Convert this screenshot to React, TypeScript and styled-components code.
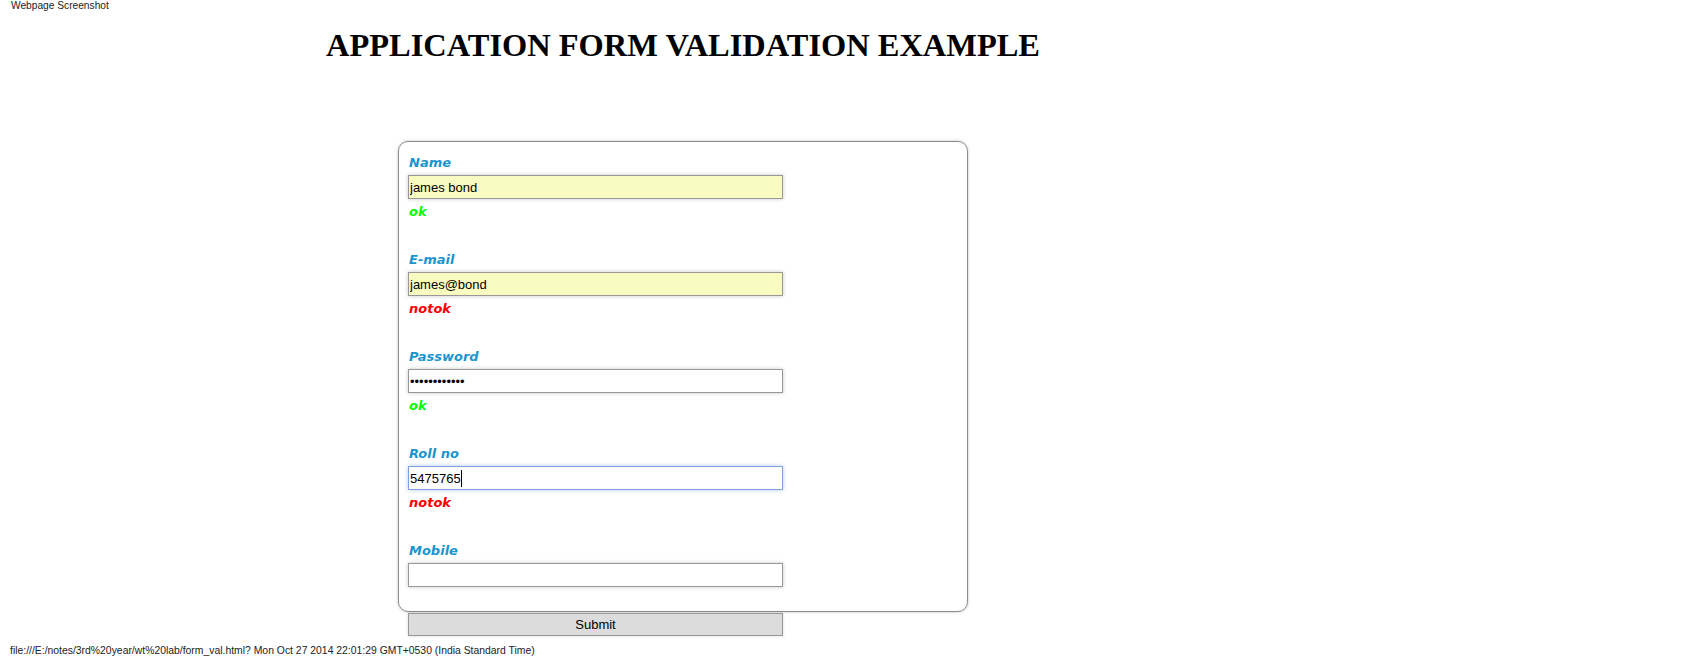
import React from "react";
import styled, { createGlobalStyle } from "styled-components";

const Global = createGlobalStyle`
  html, body { margin: 0; padding: 0; background: #fff; }
  body { font-family: "Liberation Sans", Arial, sans-serif; }
`;

const Page = styled.div`
  width: 1700px;
  height: 657px;
  display: flex;
  flex-direction: column;
  align-items: flex-start;
  padding-left: 10px;
  box-sizing: border-box;
  overflow: hidden;
`;

const Caption = styled.div<{ $left?: number; $size?: number }>`
  font-family: "Liberation Sans", Arial, sans-serif;
  font-size: ${(p) => p.$size ?? 10.2}px;
  line-height: 12px;
  color: #222;
  white-space: nowrap;
  margin-left: ${(p) => p.$left ?? 0}px;
`;

const Heading = styled.h1`
  margin: 15px 0 0 316px;
  font-family: "Liberation Serif", "Times New Roman", serif;
  font-weight: bold;
  font-size: 32.45px;
  line-height: 37px;
  color: #000;
`;

const Card = styled.form`
  margin: 77px 0 0 388px;
  width: 570px;
  box-sizing: border-box;
  border: 1px solid #8c8c8c;
  border-radius: 10px;
  box-shadow: 0 0 3px rgba(0, 0, 0, 0.25);
  padding: 13px 9px 24px;
  display: flex;
  flex-direction: column;
  gap: 32px;
`;

const Group = styled.div`
  display: flex;
  flex-direction: column;
  align-items: flex-start;
`;

const Label = styled.label`
  font-family: "DejaVu Sans", Verdana, sans-serif;
  font-weight: bold;
  font-style: italic;
  font-size: 13px;
  line-height: 16px;
  color: #1b95cf;
  margin: 0 0 4px 1px;
`;

const FieldWrap = styled.div`
  position: relative;
`;

const Field = styled.input<{ $filled?: boolean; $focused?: boolean }>`
  display: block;
  width: 375px;
  height: 24px;
  box-sizing: border-box;
  margin: 0;
  padding: 0 1px;
  font-family: "Liberation Sans", Arial, sans-serif;
  font-size: 13px;
  color: #000;
  background: ${(p) => (p.$filled ? "#f9fcc0" : "#fff")};
  border: 1px solid ${(p) => (p.$focused ? "#7ea3dc" : "#989898")};
  box-shadow: ${(p) =>
    p.$focused ? "0 0 4px rgba(80, 130, 210, 0.45)" : "0 0 4px rgba(0, 0, 0, 0.22)"};
  outline: none;
`;

const Caret = styled.span`
  position: absolute;
  top: 4px;
  width: 1px;
  height: 17px;
  background: #000;
`;

const Status = styled.div<{ $ok: boolean }>`
  font-family: "DejaVu Sans", Verdana, sans-serif;
  font-weight: bold;
  font-style: italic;
  font-size: 13px;
  line-height: 16px;
  margin: 5px 0 0 1px;
  color: ${(p) => (p.$ok ? "#00ff00" : "#ff0000")};
`;

const SubmitButton = styled.button`
  margin: 1px 0 0 398px;
  width: 375px;
  height: 24px;
  box-sizing: border-box;
  background: #dcdcdc;
  border: 1px solid #989898;
  box-shadow: 0 0 3px rgba(0, 0, 0, 0.15);
  font-family: "Liberation Sans", Arial, sans-serif;
  font-size: 13px;
  color: #000;
  padding: 0;
`;

const Footer = styled(Caption)`
  margin-top: 9px;
`;

type FieldDef = {
  label: string;
  value: string;
  type?: string;
  filled?: boolean;
  focused?: boolean;
  status?: "ok" | "notok";
};

const fields: FieldDef[] = [
  { label: "Name", value: "james bond", filled: true, status: "ok" },
  { label: "E-mail", value: "james@bond", filled: true, status: "notok" },
  { label: "Password", value: "abcdefghijkl", type: "password", status: "ok" },
  { label: "Roll no", value: "5475765", focused: true, status: "notok" },
  { label: "Mobile", value: "" },
];

export default function App() {
  return (
    <>
      <Global />
      <Page>
        <Caption $left={1}>Webpage Screenshot</Caption>
        <Heading>APPLICATION FORM VALIDATION EXAMPLE</Heading>
        <Card onSubmit={(e) => e.preventDefault()}>
          {fields.map((f) => (
            <Group key={f.label}>
              <Label>{f.label}</Label>
              <FieldWrap>
                <Field
                  type={f.type ?? "text"}
                  defaultValue={f.value}
                  $filled={f.filled}
                  $focused={f.focused}
                  readOnly
                />
                {f.focused && <Caret style={{ left: 53 }} />}
              </FieldWrap>
              {f.status && <Status $ok={f.status === "ok"}>{f.status}</Status>}
            </Group>
          ))}
        </Card>
        <SubmitButton type="button">Submit</SubmitButton>
        <Footer $size={10.4}>
          file:///E:/notes/3rd%20year/wt%20lab/form_val.html? Mon Oct 27 2014 22:01:29 GMT+0530 (India Standard Time)
        </Footer>
      </Page>
    </>
  );
}
